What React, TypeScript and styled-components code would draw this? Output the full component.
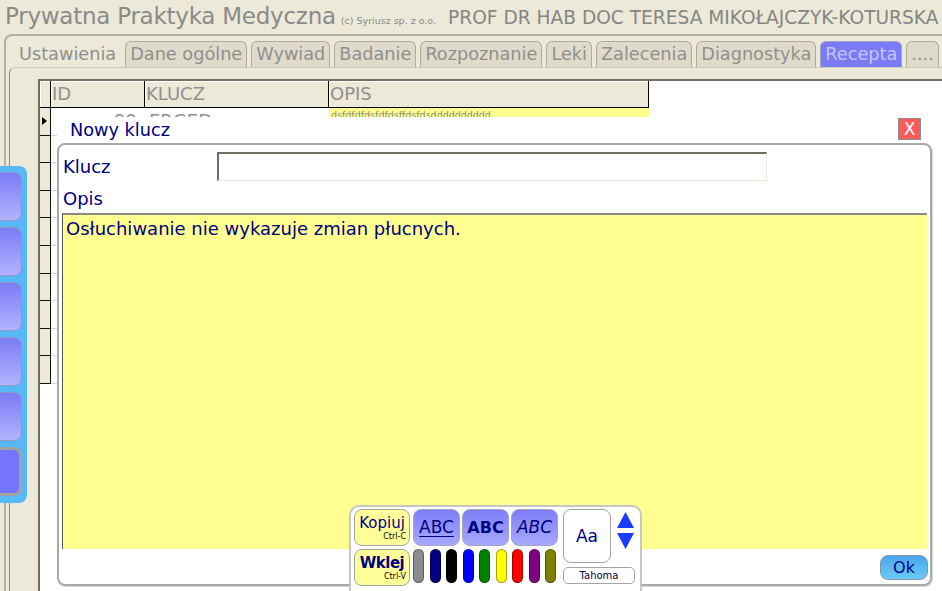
import React from "react";
import styled, { createGlobalStyle } from "styled-components";

const GlobalStyle = createGlobalStyle`
  html, body {
    margin: 0;
    padding: 0;
    background: #ece9d8;
    overflow: hidden;
  }
`;

const FONT = `"DejaVu Sans", Verdana, sans-serif`;

const tabs = [
  { label: "Ustawienia", kind: "active" },
  { label: "Dane ogólne", kind: "normal" },
  { label: "Wywiad", kind: "normal" },
  { label: "Badanie", kind: "normal" },
  { label: "Rozpoznanie", kind: "normal" },
  { label: "Leki", kind: "normal" },
  { label: "Zalecenia", kind: "normal" },
  { label: "Diagnostyka", kind: "normal" },
  { label: "Recepta", kind: "selected" },
  { label: "....", kind: "normal" },
];

const penColors = ["#8c8c8c", "#000080", "#000000", "#0000ff", "#008000", "#ffff00", "#ff0000", "#800080", "#808000"];

const sideButtons = [false, false, false, false, false, true];

const App = () => {
  const rows = Array.from({ length: 10 }, (_, i) => i);

  return (
    <>
      <GlobalStyle />
      <Page>
        <Header>
          <Title>Prywatna Praktyka Medyczna</Title>
          <Copyright>(c) Syriusz sp. z o.o.</Copyright>
          <Doctor>PROF DR HAB DOC TERESA MIKOŁAJCZYK-KOTURSKA</Doctor>
        </Header>

        <TabFrame>
          <TabRow>
            {tabs.map((t) => (
              <Tab key={t.label} kind={t.kind}>
                {t.label}
              </Tab>
            ))}
          </TabRow>

          <ContentPanel>
            <Grid>
              <Table>
                <HeadCell />
                <HeadCell>ID</HeadCell>
                <HeadCell>KLUCZ</HeadCell>
                <HeadCell>OPIS</HeadCell>
                {rows.map((i) => (
                  <React.Fragment key={i}>
                    <Indicator>{i === 0 && <Pointer />}</Indicator>
                    <Cell align="right">{i === 0 ? "99" : ""}</Cell>
                    <Cell>{i === 0 ? "ERGED" : ""}</Cell>
                    <OpisCell filled={i === 0}>{i === 0 ? "dsfdfdfdsfdfdsffdsfdsdddddddddd" : ""}</OpisCell>
                  </React.Fragment>
                ))}
              </Table>
            </Grid>
          </ContentPanel>
        </TabFrame>

        <SidePanel>
          {sideButtons.map((active, i) => (
            <SideButton key={i} active={active} />
          ))}
        </SidePanel>

        <Dialog>
          <DialogHeader>
            <DialogTitle>Nowy klucz</DialogTitle>
            <CloseButton>X</CloseButton>
          </DialogHeader>

          <DialogFrame>
            <KeyRow>
              <FieldLabel>Klucz</FieldLabel>
              <KeyInput />
            </KeyRow>
            <OpisLabel>Opis</OpisLabel>
            <Memo>Osłuchiwanie nie wykazuje zmian płucnych.</Memo>
            <Footer>
              <OkButton>Ok</OkButton>
            </Footer>
          </DialogFrame>

          <Toolbar>
            <ClipColumn>
              <ClipButton>
                <ClipText>Kopiuj</ClipText>
                <Shortcut>Ctrl-C</Shortcut>
              </ClipButton>
              <ClipButton>
                <ClipText bold>Wklej</ClipText>
                <Shortcut>Ctrl-V</Shortcut>
              </ClipButton>
            </ClipColumn>

            <StyleColumn>
              <StyleRow>
                <StyleButton variant="underline">ABC</StyleButton>
                <StyleButton variant="bold">ABC</StyleButton>
                <StyleButton variant="italic">ABC</StyleButton>
              </StyleRow>
              <PenRow>
                {penColors.map((c) => (
                  <Pen key={c} color={c} />
                ))}
              </PenRow>
            </StyleColumn>

            <FontColumn>
              <FontTop>
                <FontPreview>Aa</FontPreview>
                <SizeArrows>
                  <svg width="17" height="16" viewBox="0 0 17 16">
                    <polygon points="8.5,0 17,16 0,16" fill="#1a3cff" />
                  </svg>
                  <svg width="17" height="16" viewBox="0 0 17 16">
                    <polygon points="0,0 17,0 8.5,16" fill="#1a3cff" />
                  </svg>
                </SizeArrows>
              </FontTop>
              <FontName>Tahoma</FontName>
            </FontColumn>
          </Toolbar>
        </Dialog>
      </Page>
    </>
  );
};

export default App;

const Page = styled.div`
  position: relative;
  width: 942px;
  height: 591px;
  overflow: hidden;
  background: #ece9d8;
  font-family: ${FONT};
  display: flex;
  flex-direction: column;
`;

const Header = styled.div`
  height: 34px;
  box-sizing: border-box;
  padding: 5px 0 0 5px;
  display: flex;
  align-items: baseline;
  white-space: nowrap;
`;

const Title = styled.span`
  font-size: 23px;
  line-height: 23px;
  letter-spacing: -0.25px;
  color: #8a8a8a;
`;

const Copyright = styled.span`
  font-size: 9.5px;
  color: #8a8a8a;
  margin-left: 5px;
`;

const Doctor = styled.span`
  font-size: 18.6px;
  color: #858585;
  margin-left: 12px;
`;

const TabFrame = styled.div`
  flex: 1;
  margin-left: 4px;
  border-top: 2px solid #b2afa3;
  border-left: 2px solid #b2afa3;
  border-top-left-radius: 8px;
  display: flex;
  flex-direction: column;
  min-height: 0;
`;

const TabRow = styled.div`
  margin-top: 5px;
  padding-left: 12px;
  height: 26px;
  display: flex;
  gap: 4px;
  overflow: hidden;
`;

const Tab = styled.div<{ kind: string }>`
  flex-shrink: 0;
  height: 26px;
  box-sizing: border-box;
  padding: 0 ${({ kind }) => (kind === "active" ? "4px 0 0" : "4px")};
  border: 1px solid ${({ kind }) => (kind === "active" ? "transparent" : kind === "selected" ? "#a4a4c4" : "#aeaa9c")};
  border-bottom: none;
  border-radius: 6px 6px 0 0;
  background: ${({ kind }) => (kind === "active" ? "transparent" : kind === "selected" ? "#7b7bf8" : "#dfdbca")};
  color: ${({ kind }) => (kind === "selected" ? "#c4c4ff" : "#8f8f8f")};
  font-size: 17.7px;
  line-height: 24px;
  white-space: nowrap;
`;

const ContentPanel = styled.div`
  flex: 1;
  margin-left: 3px;
  border-top: 1px solid #cdc9b8;
  border-left: 1px solid #8f8c80;
  border-top-left-radius: 6px;
  padding: 11px 0 0 28px;
  display: flex;
  min-height: 0;
`;

const Grid = styled.div`
  flex: 1;
  background: #ffffff;
  border-top: 2px solid #716f64;
  border-left: 2px solid #716f64;
`;

const Table = styled.div`
  display: grid;
  grid-template-columns: 11px 94px 184px 320px;
  grid-template-rows: 27px;
  grid-auto-rows: 27.6px;
`;

const HeadCell = styled.div`
  box-sizing: border-box;
  background: #ece9d8;
  border-right: 1px solid #000;
  border-bottom: 1px solid #000;
  box-shadow: inset 1px 1px 0 #ffffff;
  color: #8f8f8f;
  font-size: 18px;
  line-height: 26px;
  padding-left: 1px;
`;

const Indicator = styled.div`
  box-sizing: border-box;
  background: #ece9d8;
  border-right: 1px solid #111;
  border-bottom: 1px solid #111;
  display: flex;
  align-items: center;
  padding-left: 2px;
`;

const Pointer = styled.span`
  width: 0;
  height: 0;
  border-top: 4px solid transparent;
  border-bottom: 4px solid transparent;
  border-left: 5px solid #000;
`;

const Cell = styled.div<{ align?: string }>`
  box-sizing: border-box;
  border-bottom: 1px solid #d8d6cc;
  color: #8f8f8f;
  font-size: 18px;
  line-height: 26px;
  padding: 0 8px 0 4px;
  text-align: ${({ align }) => align || "left"};
`;

const OpisCell = styled.div<{ filled: boolean }>`
  box-sizing: border-box;
  background: ${({ filled }) => (filled ? "#ffff90" : "transparent")};
  color: #8a8a7a;
  font-size: 9.5px;
  line-height: 12px;
  padding: 1px 0 0 2px;
`;

const SidePanel = styled.div`
  position: absolute;
  left: 0;
  top: 166px;
  width: 27px;
  height: 337px;
  background: #56b8f4;
  border-radius: 0 8px 8px 0;
  box-sizing: border-box;
  padding-top: 6px;
  display: flex;
  flex-direction: column;
  gap: 6px;
  overflow: hidden;
`;

const SideButton = styled.div<{ active: boolean }>`
  margin-left: -20px;
  width: 42px;
  height: 49px;
  flex-shrink: 0;
  box-sizing: border-box;
  border-radius: 8px;
  border: ${({ active }) => (active ? "3px solid #a2a2a2" : "1px solid #9696c6")};
  background: ${({ active }) => (active ? "#7474ff" : "linear-gradient(#7b7bf6, #b3b3ff)")};
`;

const Dialog = styled.div`
  position: absolute;
  left: 57px;
  top: 117px;
  width: 885px;
  height: 474px;
  background: #ffffff;
  display: flex;
  flex-direction: column;
`;

const DialogHeader = styled.div`
  height: 26px;
  flex-shrink: 0;
  display: flex;
  align-items: flex-start;
  justify-content: space-between;
  padding: 0 21px 0 13px;
`;

const DialogTitle = styled.span`
  color: #000080;
  font-size: 17.7px;
  line-height: 27px;
`;

const CloseButton = styled.div`
  margin-top: 1px;
  width: 23px;
  height: 22px;
  box-sizing: border-box;
  background: #ff5a5a;
  border: 1px solid #8c8c8c;
  color: #ffffff;
  font-size: 17px;
  line-height: 20px;
  text-align: center;
`;

const DialogFrame = styled.div`
  flex: 1;
  margin: 0 10px 5px 0;
  border: 2px solid #a9a9a9;
  border-radius: 8px;
  box-shadow: 1px 1px 0 #d6d6d6;
  display: flex;
  flex-direction: column;
  min-height: 0;
`;

const KeyRow = styled.div`
  padding-top: 7px;
  display: grid;
  grid-template-columns: 158px 550px;
  align-items: center;
`;

const FieldLabel = styled.span`
  padding-left: 4px;
  color: #000080;
  font-size: 18px;
`;

const KeyInput = styled.div`
  height: 29px;
  box-sizing: border-box;
  background: #ffffff;
  border-top: 2px solid #716f64;
  border-left: 2px solid #716f64;
  border-right: 1px solid #ece9d8;
  border-bottom: 1px solid #ece9d8;
`;

const OpisLabel = styled.span`
  margin: 7px 0 3px;
  padding-left: 4px;
  color: #000080;
  font-size: 18px;
  line-height: 22px;
`;

const Memo = styled.div`
  flex: 1;
  margin: 0 3px;
  background: #ffff90;
  border-top: 2px solid #8a8a84;
  border-left: 1px solid #55554c;
  padding: 3px 0 0 3px;
  color: #000080;
  font-size: 18px;
  line-height: 22px;
`;

const Footer = styled.div`
  height: 35px;
  flex-shrink: 0;
  display: flex;
  justify-content: flex-end;
  align-items: center;
  padding: 2px 2px 0 0;
  box-sizing: border-box;
`;

const OkButton = styled.div`
  width: 48px;
  height: 25px;
  box-sizing: border-box;
  border: 1px solid #8896a6;
  border-radius: 8px;
  background: linear-gradient(#48a6ec, #6ccaf8);
  color: #000080;
  font-size: 16px;
  line-height: 23px;
  text-align: center;
`;

const Toolbar = styled.div`
  position: absolute;
  left: 292px;
  top: 388px;
  width: 293px;
  height: 100px;
  box-sizing: border-box;
  padding: 2px 0 0 3px;
  background: #ffffff;
  border: 2px solid #c6c6c6;
  border-radius: 10px;
  display: flex;
  gap: 3px;
`;

const ClipColumn = styled.div`
  width: 56px;
  display: flex;
  flex-direction: column;
  gap: 3px;
`;

const ClipButton = styled.div`
  height: 37px;
  box-sizing: border-box;
  background: #ffff99;
  border: 1px solid #a4a4a4;
  border-radius: 8px;
  display: flex;
  flex-direction: column;
  align-items: center;
  padding-top: 4px;
`;

const ClipText = styled.span<{ bold?: boolean }>`
  color: #000080;
  font-size: 15px;
  line-height: 18px;
  font-weight: ${({ bold }) => (bold ? 700 : 400)};
  letter-spacing: ${({ bold }) => (bold ? "-0.5px" : "0")};
`;

const Shortcut = styled.span`
  align-self: flex-end;
  padding-right: 3px;
  color: #000;
  font-size: 8px;
  line-height: 9px;
`;

const StyleColumn = styled.div`
  width: 146px;
  display: flex;
  flex-direction: column;
  gap: 3px;
`;

const StyleRow = styled.div`
  display: flex;
  gap: 2px;
`;

const StyleButton = styled.div<{ variant: string }>`
  width: 47px;
  height: 37px;
  box-sizing: border-box;
  border: 1px solid #a4a4c8;
  border-radius: 8px;
  background: linear-gradient(#7e7ef8, #a8a8ff);
  color: #000080;
  text-align: center;
  font-size: ${({ variant }) => (variant === "bold" ? "16px" : "17px")};
  line-height: 35px;
  font-weight: ${({ variant }) => (variant === "bold" ? 700 : 400)};
  font-style: ${({ variant }) => (variant === "italic" ? "italic" : "normal")};
  text-decoration: ${({ variant }) => (variant === "underline" ? "underline" : "none")};
  text-underline-offset: 3px;
`;

const PenRow = styled.div`
  height: 34px;
  width: 143px;
  display: flex;
  justify-content: space-between;
`;

const Pen = styled.div<{ color: string }>`
  width: 11px;
  height: 34px;
  box-sizing: border-box;
  border-radius: 6px;
  border: 1px solid rgba(0, 0, 0, 0.35);
  background: ${({ color }) => color};
`;

const FontColumn = styled.div`
  margin-left: 1px;
  width: 72px;
  display: flex;
  flex-direction: column;
  gap: 4px;
`;

const FontTop = styled.div`
  display: flex;
  gap: 6px;
`;

const FontPreview = styled.div`
  width: 48px;
  height: 54px;
  box-sizing: border-box;
  border: 1px solid #a4a4a4;
  border-radius: 8px;
  color: #000080;
  font-size: 17px;
  line-height: 52px;
  text-align: center;
`;

const SizeArrows = styled.div`
  padding-top: 3px;
  display: flex;
  flex-direction: column;
  gap: 5px;
`;

const FontName = styled.div`
  height: 17px;
  box-sizing: border-box;
  border: 1px solid #a4a4a4;
  border-radius: 5px;
  color: #000040;
  font-size: 10px;
  line-height: 15px;
  text-align: center;
`;
